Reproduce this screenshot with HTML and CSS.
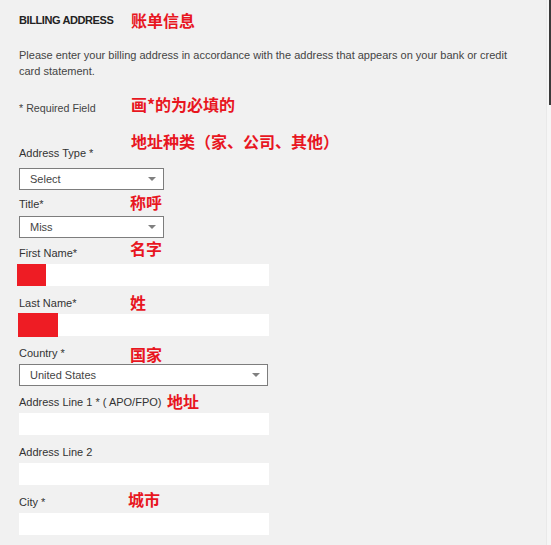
FILE: index.html
```html
<!DOCTYPE html>
<html lang="en">
<head>
<meta charset="utf-8">
<title>Billing Address</title>
<link rel="stylesheet" href="styles.css">
</head>
<body>
<div class="page">
  <div class="form">
    <h2 class="heading">BILLING ADDRESS<span class="note note-heading">账单信息</span></h2>
    <p class="intro">Please enter your billing address in accordance with the address that appears on your bank or credit card statement.</p>
    <p class="required">* Required Field<span class="note note-required">画*的为必填的</span></p>

    <div class="field field-type">
      <label class="label">Address Type *<span class="note note-type">地址种类（家、公司、其他）</span></label>
      <div class="select select-small"><span class="select-text">Select</span><span class="arrow"></span></div>
    </div>

    <div class="field field-title">
      <label class="label">Title*<span class="note note-title">称呼</span></label>
      <div class="select select-small"><span class="select-text">Miss</span><span class="arrow"></span></div>
    </div>

    <div class="field field-first">
      <label class="label">First Name*<span class="note note-first">名字</span></label>
      <div class="input"><span class="redact redact-first"></span></div>
    </div>

    <div class="field">
      <label class="label">Last Name*<span class="note note-last">姓</span></label>
      <div class="input"><span class="redact redact-last"></span></div>
    </div>

    <div class="field">
      <label class="label">Country *<span class="note note-country">国家</span></label>
      <div class="select select-wide"><span class="select-text">United States</span><span class="arrow"></span></div>
    </div>

    <div class="field field-addr1">
      <label class="label">Address Line 1 * ( APO/FPO)<span class="note note-addr">地址</span></label>
      <div class="input"></div>
    </div>

    <div class="field">
      <label class="label">Address Line 2</label>
      <div class="input"></div>
    </div>

    <div class="field">
      <label class="label">City *<span class="note note-city">城市</span></label>
      <div class="input"></div>
    </div>
  </div>
  <div class="scrollbar"><div class="scroll-thumb"></div></div>
</div>
</body>
</html>
```

FILE: styles.css
```css
html, body {
  margin: 0;
  padding: 0;
  background: #f1f1f1;
}

.page {
  position: relative;
  width: 551px;
  height: 545px;
  overflow: hidden;
  font-family: "Liberation Sans", Arial, sans-serif;
  color: #333;
}

.form {
  padding: 12px 0 0 19px;
  width: 500px;
}

.heading {
  position: relative;
  margin: 0;
  font-size: 11px;
  line-height: 16px;
  font-weight: bold;
  letter-spacing: -0.4px;
  color: #222;
}

.intro {
  margin: 19px 0 0;
  font-size: 11px;
  line-height: 16px;
  color: #444;
}

.required {
  position: relative;
  margin: 22px 0 0;
  font-size: 10.7px;
  line-height: 14px;
  color: #444;
}

.field {
  margin-top: 10px;
}

.field-type { margin-top: 31px; }
.field-title { margin-top: 7px; }
.field-first { margin-top: 8px; }
.field-addr1 { margin-top: 9px; }

.label {
  position: relative;
  display: block;
  font-size: 11px;
  line-height: 14px;
  color: #333;
  margin-bottom: 4px;
}

.field-type .label { margin-bottom: 8px; }
.field-title .label { margin-bottom: 5px; }

.select {
  position: relative;
  box-sizing: border-box;
  height: 22px;
  border: 1px solid #7d7d7d;
  background: #fff;
  display: flex;
  align-items: center;
  padding-left: 10px;
}

.select-small { width: 145px; }
.select-wide { width: 249px; }

.select-text {
  font-size: 11px;
  color: #444;
}

.arrow {
  position: absolute;
  right: 7px;
  top: 8px;
  width: 0;
  height: 0;
  border-left: 4px solid transparent;
  border-right: 4px solid transparent;
  border-top: 4px solid #808080;
}

.select-wide .arrow { right: 7px; }

.input {
  position: relative;
  box-sizing: border-box;
  width: 250px;
  height: 22px;
  background: #fff;
}

.redact {
  position: absolute;
  background: #ee1c24;
}

.redact-first {
  left: -2px;
  top: 0;
  width: 29px;
  height: 22px;
}

.redact-last {
  left: -1px;
  top: -1px;
  width: 40px;
  height: 24px;
}

.note {
  position: absolute;
  white-space: nowrap;
  font-family: "Noto Sans CJK SC", "Liberation Sans", sans-serif;
  font-size: 16px;
  line-height: 16px;
  font-weight: bold;
  letter-spacing: 0;
  color: #e8161f;
}

.note-heading { left: 112px; top: 0; }
.note-required { left: 112px; top: -5px; }
.note-type { left: 112px; top: -13px; }
.note-title { left: 111px; top: -3px; }
.note-first { left: 111px; top: -6px; }
.note-last { left: 111px; top: -2px; }
.note-country { left: 111px; top: 0; }
.note-addr { left: 148px; top: -2px; }
.note-city { left: 109px; top: -4px; }

.scrollbar {
  position: absolute;
  top: 0;
  right: 0;
  width: 4px;
  height: 545px;
  background: #f6f6f6;
  border-left: 1px solid #e9e9e9;
}

.scroll-thumb {
  margin-left: 2px;
  width: 2px;
  height: 105px;
  background: #3a3a3a;
}
```
